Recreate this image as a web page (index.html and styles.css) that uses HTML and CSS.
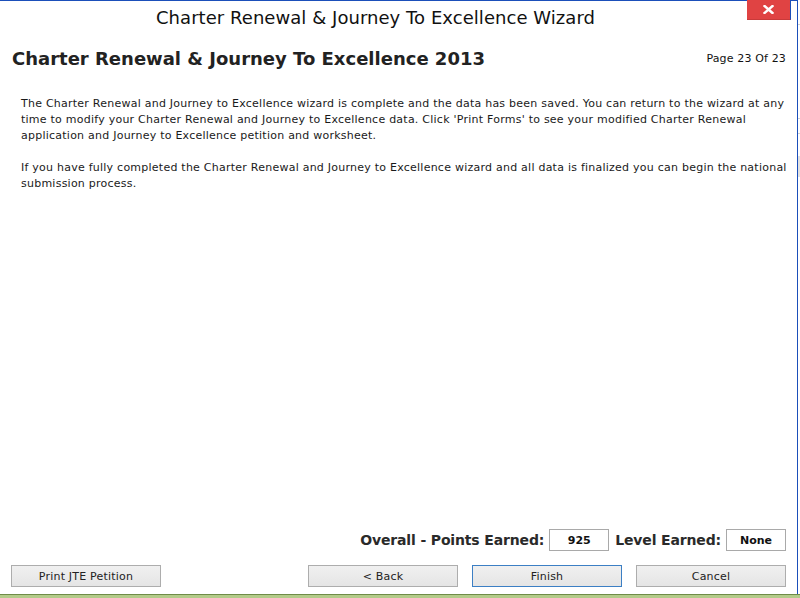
FILE: index.html
```html
<!DOCTYPE html>
<html lang="en">
<head>
<meta charset="utf-8">
<title>Charter Renewal &amp; Journey To Excellence Wizard</title>
<link rel="stylesheet" href="styles.css">
</head>
<body>
<div class="desktop">
  <div class="main">
    <div class="window">
      <div class="titlebar">
        <div class="title">Charter Renewal &amp; Journey To Excellence Wizard</div>
        <button class="close" aria-label="Close">
          <svg width="11" height="9" viewBox="0 0 11 9"><path d="M1.5 1 L9.5 8 M9.5 1 L1.5 8" stroke="#fff" stroke-width="2.4" stroke-linecap="square"/></svg>
        </button>
      </div>
      <div class="header">
        <h1 class="heading">Charter Renewal &amp; Journey To Excellence 2013</h1>
        <div class="page">Page 23 Of 23</div>
      </div>
      <div class="content">
        <p>The Charter Renewal and Journey to Excellence wizard is complete and the data has been saved. You can return to the wizard at any time to modify your Charter Renewal and Journey to Excellence data. Click 'Print Forms' to see your modified Charter Renewal application and Journey to Excellence petition and worksheet.</p>
        <p>If you have fully completed the Charter Renewal and Journey to Excellence wizard and all data is finalized you can begin the national submission process.</p>
      </div>
      <div class="scores">
        <span class="label">Overall - Points Earned:</span>
        <span class="box points">925</span>
        <span class="label">Level Earned:</span>
        <span class="box level">None</span>
      </div>
      <div class="buttons">
        <button class="btn">Print JTE Petition</button>
        <div class="nav">
          <button class="btn">&lt; Back</button>
          <button class="btn default">Finish</button>
          <button class="btn">Cancel</button>
        </div>
      </div>
    </div>
    <div class="side">
      <div class="line l1"></div>
      <div class="line l2"></div>
      <div class="line l3"></div>
      <div class="bar"></div>
    </div>
  </div>
  <div class="taskbar"></div>
</div>
</body>
</html>
```

FILE: styles.css
```css
html, body {
  margin: 0;
  padding: 0;
  width: 800px;
  height: 598px;
  overflow: hidden;
  background: #fff;
}

.desktop {
  width: 800px;
  height: 598px;
  display: flex;
  flex-direction: column;
  font-family: "DejaVu Sans", Verdana, sans-serif;
}

.main {
  flex: 1;
  display: flex;
  min-height: 0;
}

.window {
  width: 798px;
  border-top: 1px solid #1b4fba;
  border-right: 1px solid #1b4fba;
  background: #fff;
  display: flex;
  flex-direction: column;
  box-sizing: border-box;
  flex: none;
}

.side {
  flex: 1;
  background: #fff;
  display: flex;
  flex-direction: column;
}
.side .line { height: 1px; background: #d4d4d4; }
.side .l1 { margin-top: 24px; }
.side .l2 { margin-top: 93px; }
.side .l3 { margin-top: 14px; }
.side .bar { margin-top: 22px; height: 21px; background: #e2e2e2; }

.titlebar {
  height: 31px;
  display: flex;
  align-items: flex-start;
  position: relative;
}

.title {
  flex: 1;
  text-align: center;
  padding-right: 46px;
  font-size: 18px;
  line-height: 22px;
  padding-top: 6px;
  color: #111;
  letter-spacing: 0.05px;
}

.close {
  position: absolute;
  top: -1px;
  right: 6px;
  width: 44px;
  height: 20px;
  border: none;
  border-right: 1px solid #1b4fba;
  border-bottom: 1px solid #c83a3a;
  background: #e04343;
  padding: 0;
  display: flex;
  align-items: center;
  justify-content: center;
}

.header {
  display: flex;
  justify-content: space-between;
  align-items: center;
  padding: 12px 11px 0 12px;
  height: 28px;
}

.heading {
  margin: 0;
  font-size: 18px;
  font-weight: bold;
  color: #222;
  letter-spacing: 0;
}

.page {
  font-size: 11px;
  color: #111;
  letter-spacing: 0.15px;
}

.content {
  padding: 24px 8px 0 21px;
  flex: 1;
}

.content p {
  margin: 0 0 16px 0;
  font-size: 11px;
  line-height: 16px;
  color: #1a1a1a;
  letter-spacing: 0.24px;
}

.scores {
  display: flex;
  justify-content: flex-end;
  align-items: center;
  gap: 5px;
  padding: 0 11px 0 0;
  height: 22px;
}

.label {
  font-size: 14px;
  font-weight: bold;
  color: #2a2a2a;
  letter-spacing: -0.15px;
}

.box {
  box-sizing: border-box;
  height: 22px;
  border: 1px solid #a9a9a9;
  display: flex;
  align-items: center;
  justify-content: center;
  font-size: 11px;
  font-weight: bold;
  color: #111;
}
.points { width: 60px; margin-right: 1px; }
.level { width: 60px; }

.buttons {
  display: flex;
  justify-content: space-between;
  padding: 14px 11px 7px 11px;
}

.nav {
  display: flex;
  gap: 14px;
}

.btn {
  box-sizing: border-box;
  width: 150px;
  height: 22px;
  border: 1px solid #adadad;
  background: linear-gradient(#f0f0f0, #e5e5e5);
  font-family: "DejaVu Sans", Verdana, sans-serif;
  font-size: 11px;
  color: #222;
  padding: 0;
  letter-spacing: 0.2px;
}

.btn.default {
  border-color: #3c7fc4;
}

.taskbar {
  height: 3px;
  border-top: 1px solid #6f8c48;
  background: #b3cb89;
}
```
